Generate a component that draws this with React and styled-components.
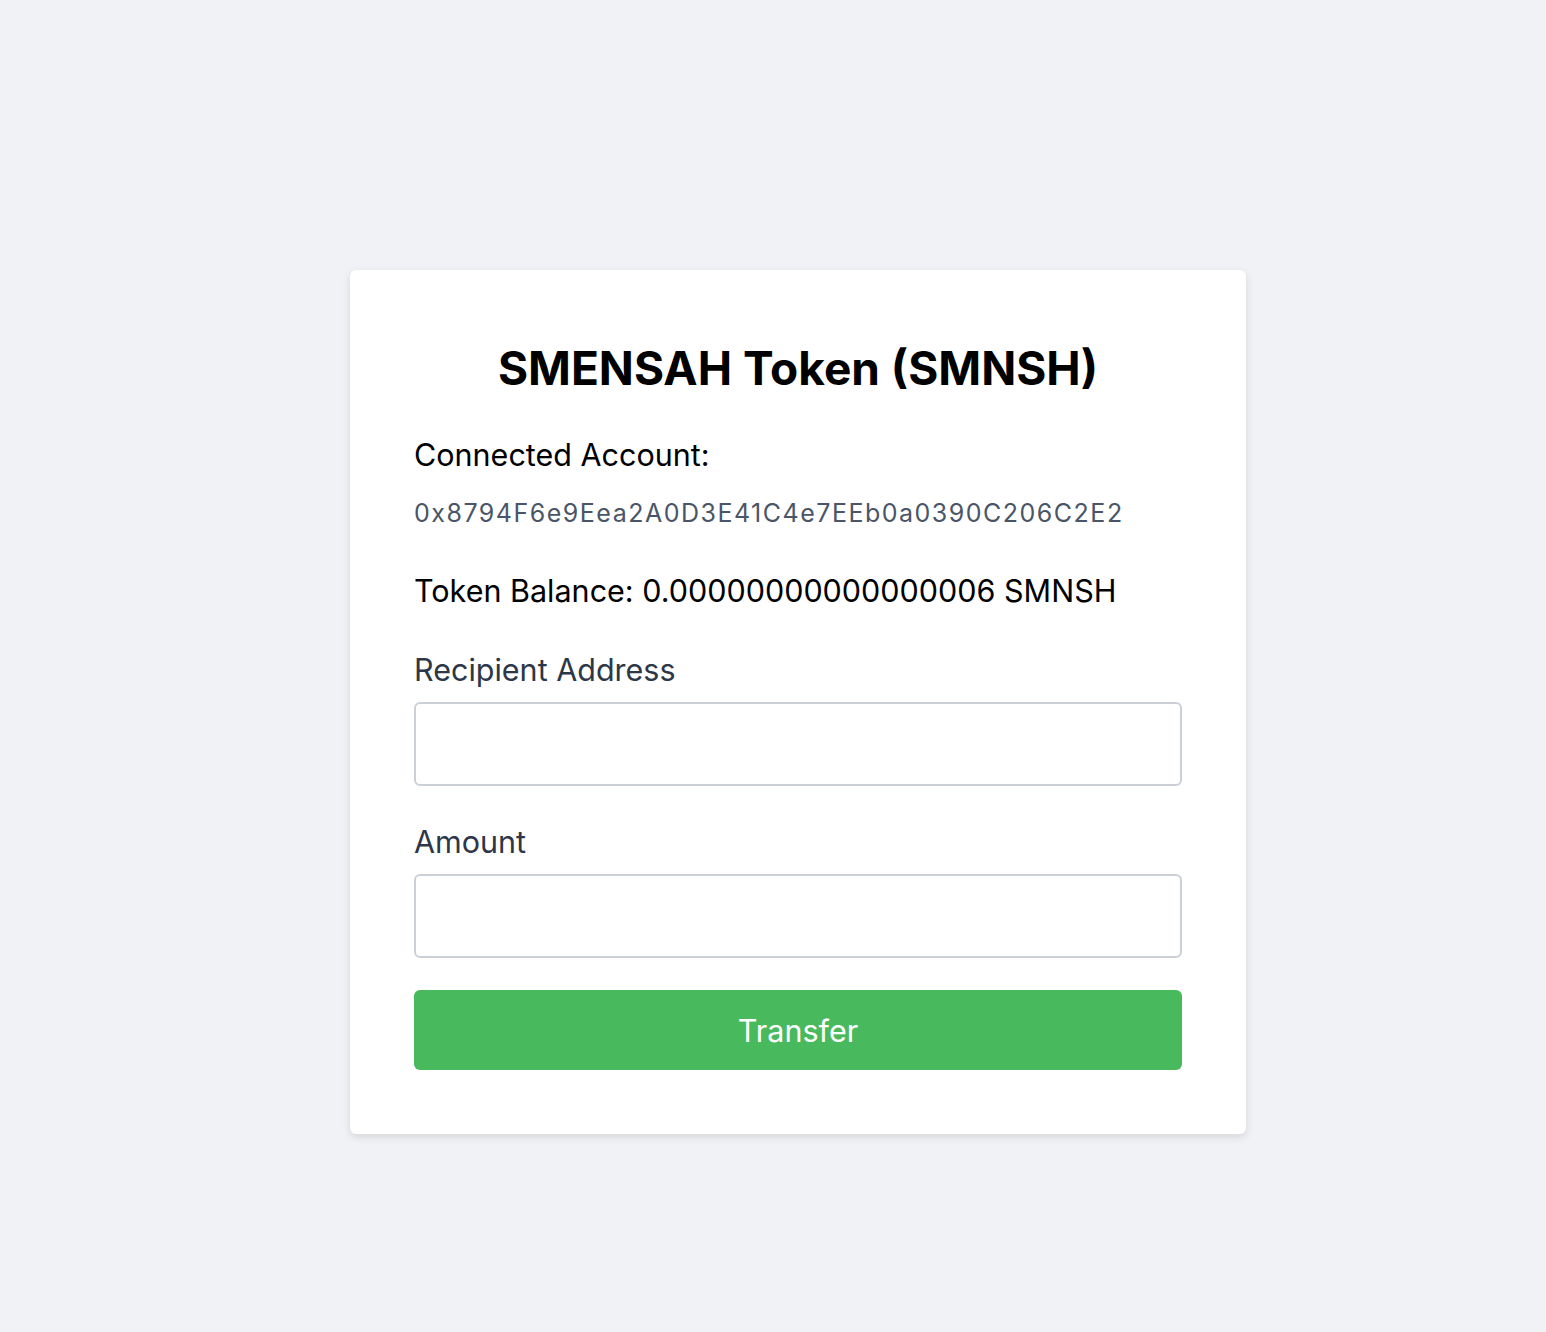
import React from "react";
import styled, { createGlobalStyle } from "styled-components";

const GlobalStyle = createGlobalStyle`
  * {
    box-sizing: border-box;
  }
  body {
    margin: 0;
    background: #f0f2f5;
    font-family: Inter, "Noto Sans", "Liberation Sans", sans-serif;
    color: #000;
  }
`;

const Page = styled.div`
  min-height: 100vh;
  display: flex;
  justify-content: center;
  align-items: flex-start;
  padding: 270px 0 0 50px;
`;

const Card = styled.div`
  width: 896px;
  background: #fff;
  border-radius: 6px;
  box-shadow: 0 3px 8px rgba(0, 0, 0, 0.12);
  padding: 64px;
`;

const Title = styled.h1`
  margin: 7px 0 0;
  font-size: 46px;
  line-height: 55px;
  font-weight: 700;
  text-align: center;
`;

const Text = styled.p`
  margin: ${(p) => p.$gap || 0}px 0 0;
  font-size: 30.5px;
  line-height: 42px;
`;

const Address = styled.p`
  margin: 19px 0 0;
  font-size: 25px;
  line-height: 36px;
  letter-spacing: 1.5px;
  color: #4a5568;
`;

const Field = styled.div`
  margin-top: ${(p) => p.$gap}px;
  display: flex;
  flex-direction: column;
  gap: 11px;
`;

const Label = styled.label`
  font-size: 30.5px;
  line-height: 42px;
  color: #2d3748;
`;

const Input = styled.input`
  width: 100%;
  height: 84px;
  border: 2px solid #cbd0d6;
  border-radius: 6px;
  padding: 0 16px;
  font: inherit;
  font-size: 28px;
  outline: none;
`;

const Button = styled.button`
  margin-top: 32px;
  width: 100%;
  height: 80px;
  border: none;
  border-radius: 6px;
  background: #48b95c;
  color: #fff;
  font-family: inherit;
  font-size: 30.5px;
  cursor: pointer;
`;

export default function App() {
  return (
    <>
      <GlobalStyle />
      <Page>
        <Card>
          <Title>SMENSAH Token (SMNSH)</Title>
          <Text $gap={38}>Connected Account:</Text>
          <Address>0x8794F6e9Eea2A0D3E41C4e7EEb0a0390C206C2E2</Address>
          <Text $gap={39}>Token Balance: 0.00000000000000006 SMNSH</Text>
          <Field $gap={37}>
            <Label>Recipient Address</Label>
            <Input type="text" />
          </Field>
          <Field $gap={35}>
            <Label>Amount</Label>
            <Input type="text" />
          </Field>
          <Button>Transfer</Button>
        </Card>
      </Page>
    </>
  );
}
